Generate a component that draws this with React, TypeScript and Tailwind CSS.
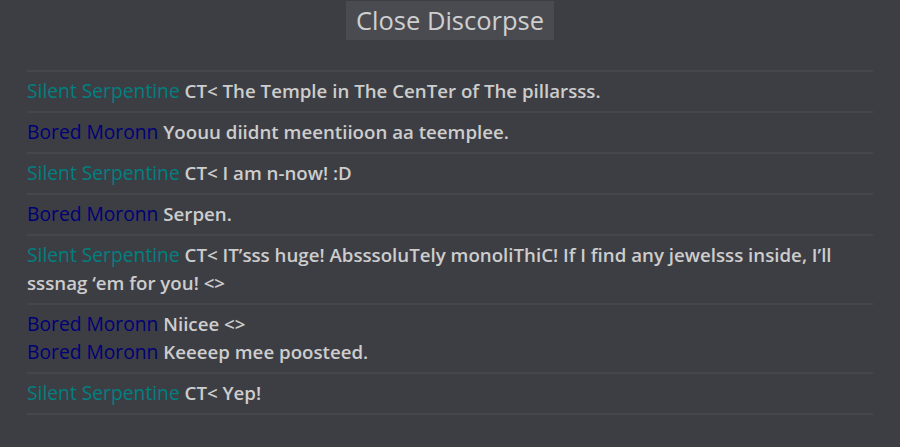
import React from 'react';

type Speaker = 'serpent' | 'moron';

interface Line {
  who: Speaker;
  text: string;
}

const names: Record<Speaker, string> = {
  serpent: 'Silent Serpentine',
  moron: 'Bored Moronn',
};

const nameColor: Record<Speaker, string> = {
  serpent: 'text-[#008080]',
  moron: 'text-[#000076]',
};

const groups: Line[][] = [
  [{ who: 'serpent', text: 'CT< The Temple in The CenTer of The pillarsss.' }],
  [{ who: 'moron', text: 'Yoouu diidnt meentiioon aa teemplee.' }],
  [{ who: 'serpent', text: 'CT< I am n-now! :D' }],
  [{ who: 'moron', text: 'Serpen.' }],
  [
    {
      who: 'serpent',
      text: 'CT< IT’sss huge! AbsssoluTely monoliThiC! If I find any jewelsss inside, I’ll sssnag ‘em for you! <>',
    },
  ],
  [
    { who: 'moron', text: 'Niicee <>' },
    { who: 'moron', text: 'Keeeep mee poosteed.' },
  ],
  [{ who: 'serpent', text: 'CT< Yep!' }],
];

export default function App() {
  return (
    <div
      className="w-[900px] h-[447px] bg-[#3d3e44] overflow-hidden"
      style={{ fontFamily: '"Open Sans", "Noto Sans", sans-serif' }}
    >
      <div className="flex justify-center pt-[1px]">
        <button className="w-[208px] h-[39px] bg-[#4a4b51] text-[#cfcfcf] text-[25.5px] leading-[39px] font-normal">
          Close Discorpse
        </button>
      </div>
      <div className="px-[27px] pt-[30px]">
        <div className="border-b-2 border-[#46474d]">
          {groups.map((group, i) => (
            <div key={i} className="border-t-2 border-[#46474d] pt-[5px] pb-[6px]">
              {group.map((line, j) => (
                <p key={j} className="text-[18.7px] leading-[28px] text-[#cdcdcd] font-semibold">
                  <span className={`${nameColor[line.who]} text-[19.25px] font-normal`}>{names[line.who]}</span>{' '}
                  {line.text}
                </p>
              ))}
            </div>
          ))}
        </div>
      </div>
    </div>
  );
}
